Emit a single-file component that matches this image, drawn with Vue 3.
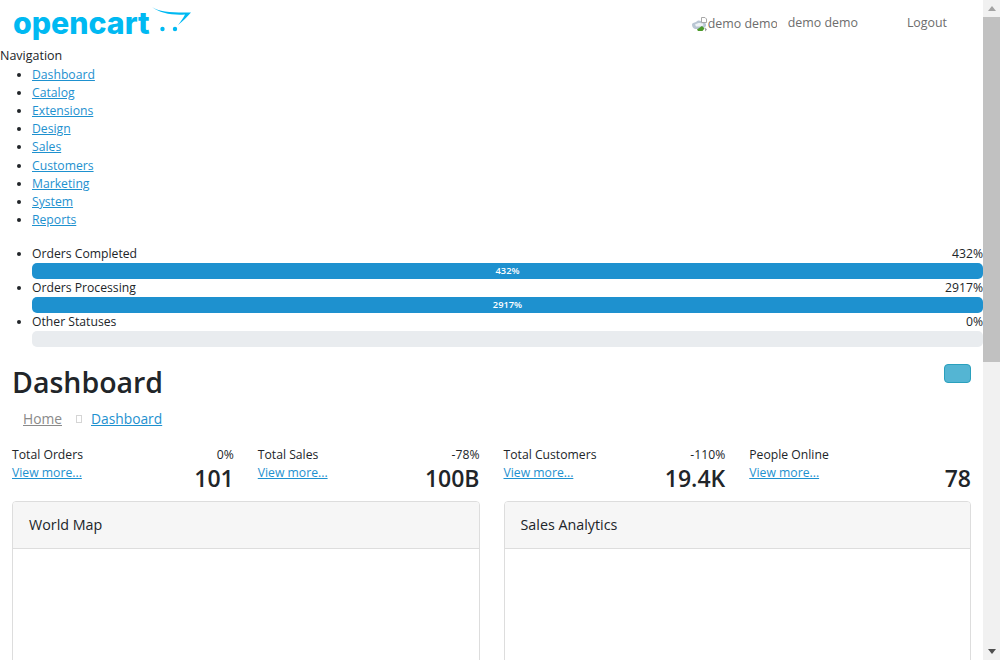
<template>
  <div class="shell">
    <div class="page">
      <header class="topbar">
        <a class="logo" href="#">
          <span class="logo-word">opencart</span>
          <svg class="logo-cart" width="42" height="32" viewBox="0 0 42 32">
            <path d="M1 7C8 12 24 13 40 12.500C36 17 32 21 27 25C30 21 32.500 18 34 14.500C22 15.500 8 13 1 7Z" fill="#00b9f2" />
            <circle cx="11.500" cy="29" r="2.200" fill="#00b9f2" />
            <circle cx="24" cy="29" r="2.200" fill="#00b9f2" />
          </svg>
        </a>
        <div class="user">
          <div class="broken-img">
            <svg class="broken-icon" width="17" height="16" viewBox="0 0 17 16">
              <path d="M1 8.500C1 7 3 6.500 5 6C6 4.500 8 4 10 5L13 5.500L15 8V10L12 13H4C2 12.500 1 10.500 1 8.500Z" fill="#b9c6d3" />
              <path d="M4 8.500C6 7 9 6.500 12 7.500L12.500 9.500L9 10.500H5Z" fill="#eef2f6" />
              <path d="M6 13.500L11 10L13.500 12.500L11.500 15H7Z" fill="#4c9a2a" />
              <path d="M10.500 1.500H14L15.500 3V6.500H10.500Z" fill="#fff" stroke="#a8a8a8" />
              <path d="M14 11.500L16 13.500L14 15.500Z" fill="#a0a0a0" />
            </svg>
            <span>demo demo</span>
          </div>
          <span class="user-name">demo demo</span>
          <span class="logout">Logout</span>
        </div>
      </header>

      <div class="nav-title">Navigation</div>
      <ul class="menu">
        <li v-for="item in menu" :key="item"><a href="#">{{ item }}</a></li>
      </ul>

      <ul class="statuses">
        <li v-for="s in statuses" :key="s.label">
          <div class="status-row">
            <span>{{ s.label }}</span>
            <span>{{ s.value }}%</span>
          </div>
          <div class="bar">
            <div v-if="s.value > 0" class="bar-fill" :style="{ width: Math.min(s.value, 100) + '%' }">{{ s.value }}%</div>
          </div>
        </li>
      </ul>

      <div class="head">
        <h1>Dashboard</h1>
        <button class="btn-info" type="button"></button>
      </div>
      <div class="crumbs">
        <a class="home" href="#">Home</a>
        <span class="sep"></span>
        <a href="#">Dashboard</a>
      </div>

      <div class="tiles">
        <div v-for="t in tiles" :key="t.title" class="tile">
          <div class="tile-row">
            <span>{{ t.title }}</span>
            <span>{{ t.delta }}</span>
          </div>
          <div class="tile-row tile-low">
            <a href="#">View more...</a>
            <span class="tile-num">{{ t.total }}</span>
          </div>
        </div>
      </div>

      <div class="cards">
        <section class="card">
          <div class="card-head">World Map</div>
        </section>
        <section class="card">
          <div class="card-head">Sales Analytics</div>
        </section>
      </div>
    </div>

    <div class="scrollbar">
      <span class="arrow arrow-up"></span>
      <div class="thumb-track">
        <div class="thumb"></div>
      </div>
      <span class="arrow arrow-down"></span>
    </div>
  </div>
</template>

<script setup>
const menu = ["Dashboard", "Catalog", "Extensions", "Design", "Sales", "Customers", "Marketing", "System", "Reports"];

const statuses = [
  { label: "Orders Completed", value: 432 },
  { label: "Orders Processing", value: 2917 },
  { label: "Other Statuses", value: 0 }
];

const tiles = [
  { title: "Total Orders", delta: "0%", total: "101" },
  { title: "Total Sales", delta: "-78%", total: "100B" },
  { title: "Total Customers", delta: "-110%", total: "19.4K" },
  { title: "People Online", delta: "", total: "78" }
];
</script>

<style>
html,
body {
  margin: 0;
  overflow: hidden;
}
</style>

<style scoped>
.shell {
  height: 660px;
  display: flex;
  overflow: hidden;
  background: #fff;
}

.page {
  flex: 1;
  min-width: 0;
  font-family: "Open Sans", "Liberation Sans", sans-serif;
  font-size: 12.2px;
  line-height: 18.1px;
  color: #212529;
}

.scrollbar {
  width: 17px;
  flex-shrink: 0;
  display: flex;
  flex-direction: column;
  background: #f1f1f1;
}

.arrow {
  height: 17px;
  flex-shrink: 0;
  display: flex;
  align-items: center;
  justify-content: center;
}

.arrow::before {
  content: "";
  border-left: 4.5px solid transparent;
  border-right: 4.5px solid transparent;
}

.arrow-up::before {
  border-bottom: 5px solid #a3a3a3;
}

.arrow-down::before {
  border-top: 5px solid #505050;
}

.thumb-track {
  flex: 1;
}

.thumb {
  height: 345px;
  background: #c1c1c1;
}

a {
  color: #1e91cf;
}

.topbar {
  height: 47px;
  display: flex;
  justify-content: space-between;
  color: #6d6d6d;
}

.logo {
  display: flex;
  align-items: flex-start;
  margin-left: 13px;
  text-decoration: none;
}

.logo-word {
  font-family: "Inter", sans-serif;
  font-weight: 800;
  font-size: 30.3px;
  line-height: 46px;
  color: #00b9f2;
}

.logo-cart {
  margin: 0 0 0 1px;
}

.user {
  display: flex;
  align-items: flex-start;
  padding-right: 36px;
  font-size: 12.4px;
}

.broken-img {
  width: 86px;
  height: 20px;
  margin-top: 14px;
  display: flex;
  align-items: center;
  overflow: hidden;
  white-space: nowrap;
}

.broken-icon {
  flex-shrink: 0;
}

.user-name {
  margin: 14px 0 0 11px;
}

.logout {
  margin: 14px 0 0 49px;
}

.nav-title {
  font-size: 12.5px;
}

.menu,
.statuses {
  margin: 0;
  padding-left: 32px;
}

.menu {
  margin-top: 1px;
  margin-bottom: 16px;
}

.status-row {
  display: flex;
  justify-content: space-between;
}

.bar {
  height: 16px;
  border-radius: 5px;
  background: #e9ecef;
  overflow: hidden;
}

.bar-fill {
  height: 100%;
  background: #1e91cf;
  color: #fff;
  font-size: 9.3px;
  font-weight: 600;
  line-height: 16px;
  text-align: center;
}

.head {
  display: flex;
  justify-content: space-between;
  align-items: flex-start;
  padding: 17px 12px 0 12px;
}

h1 {
  margin: 0;
  font-size: 28.5px;
  font-weight: 600;
  line-height: 36px;
}

.btn-info {
  width: 27px;
  height: 19px;
  padding: 0;
  border: 1px solid #2aa0bd;
  border-radius: 4px;
  background: #54b5d3;
}

.crumbs {
  display: flex;
  align-items: center;
  height: 24px;
  margin-top: 7px;
  padding-left: 23px;
  font-size: 13.8px;
}

.home {
  color: #8a8a8a;
}

.sep {
  width: 4px;
  height: 6px;
  margin: 0 9px 0 14px;
  border: 1px solid #d5d5d5;
}

.tiles {
  display: grid;
  grid-template-columns: repeat(4, 1fr);
  gap: 24px;
  padding: 0 12px;
  margin-top: 15px;
}

.tile-row {
  display: flex;
  justify-content: space-between;
}

.tile-low {
  align-items: flex-start;
}

.tile-num {
  font-size: 23px;
  font-weight: 600;
  line-height: 30px;
  margin-top: -1px;
}

.cards {
  display: grid;
  grid-template-columns: 1fr 1fr;
  gap: 24px;
  padding: 0 12px;
  margin-top: 8px;
}

.card {
  height: 640px;
  box-sizing: border-box;
  border: 1px solid #ddd;
  border-radius: 4px;
  overflow: hidden;
}

.card-head {
  height: 47px;
  box-sizing: border-box;
  padding: 0 16px;
  border-bottom: 1px solid #ddd;
  background: #f6f6f6;
  font-size: 14.3px;
  line-height: 46px;
}
</style>
